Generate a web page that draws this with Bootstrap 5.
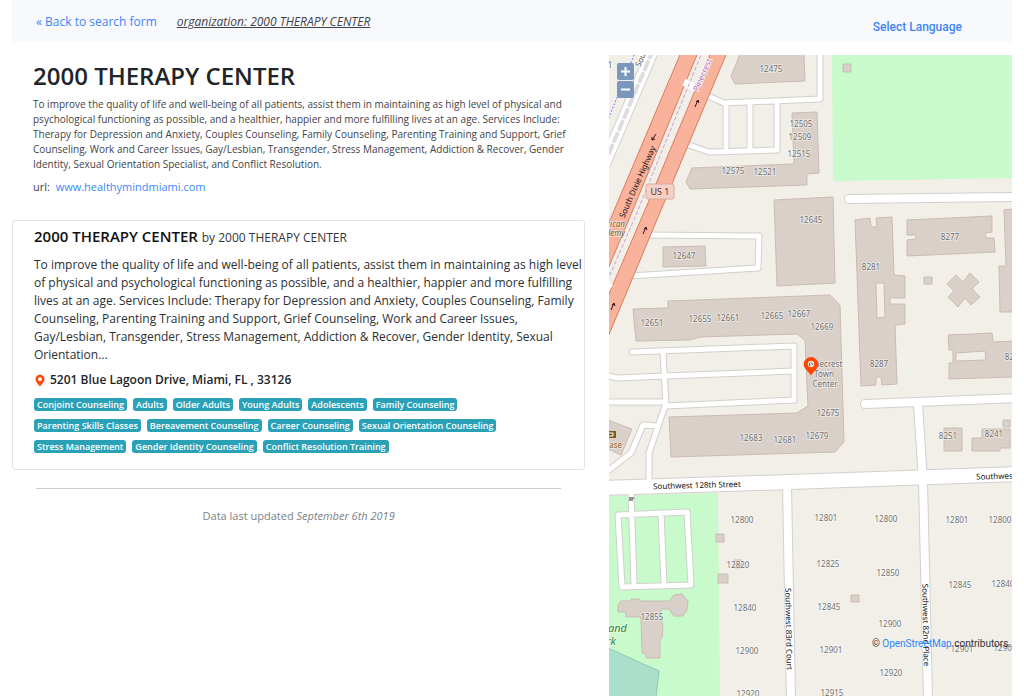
<!DOCTYPE html>
<html lang="en">
<head>
<meta charset="utf-8">
<meta name="viewport" content="width=device-width, initial-scale=1">
<title>2000 THERAPY CENTER</title>
<link href="https://cdn.jsdelivr.net/npm/bootstrap@5.3.0/dist/css/bootstrap.min.css" rel="stylesheet">
<style>
  body { font-family: "Open Sans", "Noto Sans", sans-serif; font-size: 12px; line-height: 18px; color: #212529; }
  a { color: #3d86f8; text-decoration: none; }
  a:hover { text-decoration: underline; }
  .topbar { background: #f8f9fc; height: 42px; padding: 0 24px; }
  .crumbs { gap: 20px; padding-top: 2px; }
  .crumb { color: #3f4347; font-style: italic; text-decoration: underline; }
  .language { font-family: Roboto, sans-serif; font-weight: 500; padding: 18px 26px 0 0; }
  .org-head { padding: 12px 6px 0 21px; }
  .org-head h1 { font-size: 24px; line-height: 28px; font-weight: 600; margin: 0 0 7px; }
  .org-text { font-size: 10px; line-height: 15px; color: #3f4347; margin: 0 0 6px; }
  .org-url { font-size: 11px; line-height: 18px; margin: 0 0 24px; color: #3f4347; }
  .service { border-color: #e2e3e5; border-radius: 3px; padding: 6px 2px 16px 21px; }
  .service h2 { font-size: 15px; line-height: 18px; font-weight: 600; margin: 0 0 9px; color: #111; }
  .service h2 small { font-size: 12px; font-weight: 400; color: #33373b; }
  .service p { margin: 0 0 7px; color: #2b2f33; }
  .address { font-weight: 600; gap: 4px; margin-bottom: 9px; }
  .tags { gap: 8px 6px; padding-right: 36px; }
  .tags .badge { font-size: 9px; line-height: 13px; font-weight: 600; padding: 0 3px; border-radius: 3px; background: #2aa1b7; }
  .rule { margin: 18px 24px 18px; color: #9a9c9f; opacity: .5; }
  .updated { font-size: 11px; color: #7b8187; }
  .map { height: calc(100vh - 55px); min-height: 480px; margin-top: 13px; background: #f2efe9; }
  .zoomers { top: 8px; left: 8px; gap: 1px; }
  .zoomers button { width: 17px; height: 17px; padding: 0; border: 0; border-radius: 2px; background: #7b98bc; display: flex; }
  .credit { right: 1px; bottom: 43px; font-size: 10px; line-height: 18px; color: #333; white-space: nowrap; font-family: Roboto, sans-serif; }
  .credit a { color: #2a86ff; }

  .mapart text { font-family: "Noto Sans", sans-serif; font-size: 8px; text-anchor: middle; fill: #707070; stroke: #fff; stroke-opacity: .55; stroke-width: 1.6px; paint-order: stroke; }
  .mapart .street text { fill: #111; stroke-opacity: 1; }
  .bld { fill: #d9d0c9; stroke: #cbbbb0; stroke-width: 1; }
  .casing { fill: none; stroke: #d2d0cc; stroke-linejoin: round; }
  .way { fill: none; stroke: #fff; stroke-linejoin: round; }
  .hwy { fill: #f9b29c; stroke: #d87c5c; stroke-width: 1; }
</style>
</head>
<body>
<div class="container-fluid">
  <header class="topbar d-flex justify-content-between">
    <nav class="crumbs d-flex align-items-center">
      <a href="#">« Back to search form</a>
      <span class="crumb">organization: 2000 THERAPY CENTER</span>
    </nav>
    <div class="language"><a href="#">Select Language</a></div>
  </header>

  <div class="row">
    <main class="col-7">
      <section class="org-head mt-2">
        <h1>2000 THERAPY CENTER</h1>
        <p class="org-text">To improve the quality of life and well-being of all patients, assist them in maintaining as high level of physical and psychological functioning as possible, and a healthier, happier and more fulfilling lives at an age. Services Include: Therapy for Depression and Anxiety, Couples Counseling, Family Counseling, Parenting Training and Support, Grief Counseling, Work and Career Issues, Gay/Lesbian, Transgender, Stress Management, Addiction &amp; Recover, Gender Identity, Sexual Orientation Specialist, and Conflict Resolution.</p>
        <p class="org-url">url: &nbsp;<a href="#">www.healthymindmiami.com</a></p>
      </section>

      <article class="card service">
        <h2>2000 THERAPY CENTER <small>by 2000 THERAPY CENTER</small></h2>
        <p>To improve the quality of life and well-being of all patients, assist them in maintaining as high level of physical and psychological functioning as possible, and a healthier, happier and more fulfilling lives at an age. Services Include: Therapy for Depression and Anxiety, Couples Counseling, Family Counseling, Parenting Training and Support, Grief Counseling, Work and Career Issues, Gay/Lesbian, Transgender, Stress Management, Addiction &amp; Recover, Gender Identity, Sexual Orientation...</p>
        <div class="address d-flex align-items-center">
          <svg width="12" height="13" viewBox="0 0 12 13" aria-hidden="true"><path d="M6 .8a4.500 4.500 0 0 0-4.500 4.500C1.500 8 4.300 10 6 12.600 7.700 10 10.500 8 10.500 5.300A4.500 4.500 0 0 0 6 .8z" fill="#ff4500"/><circle cx="6" cy="5.200" r="2" fill="#fff"/></svg>
          <span>5201 Blue Lagoon Drive, Miami, FL , 33126</span>
        </div>
        <div class="tags d-flex flex-wrap">
          <span class="badge">Conjoint Counseling</span>
          <span class="badge">Adults</span>
          <span class="badge">Older Adults</span>
          <span class="badge">Young Adults</span>
          <span class="badge">Adolescents</span>
          <span class="badge">Family Counseling</span>
          <span class="badge">Parenting Skills Classes</span>
          <span class="badge">Bereavement Counseling</span>
          <span class="badge">Career Counseling</span>
          <span class="badge">Sexual Orientation Counseling</span>
          <span class="badge">Stress Management</span>
          <span class="badge">Gender Identity Counseling</span>
          <span class="badge">Conflict Resolution Training</span>
        </div>
      </article>

      <hr class="rule">
      <p class="updated text-center mb-0">Data last updated <em>September 6th 2019</em></p>
    </main>

    <aside class="col-5">
      <div class="map position-relative overflow-hidden">
        <svg class="mapart d-block w-100 h-100" viewBox="609 55 403 641" preserveAspectRatio="xMinYMin slice" role="img" aria-label="Street map">
          <!-- parks and pool -->
          <path fill="#c8facc" d="M832 55H1013V178L833 181zM609 496L718 493 720 697H609z"/>
          <path fill="#aae0cb" stroke="#8fc9b3" d="M608 648L659 671 656 697H608z"/>

          <!-- buildings -->
          <g class="bld">
            <path d="M740 54H804L805 81 735 84 731 76z"/>
            <path d="M792 113L817 112 819 173 807 174V185L690 189 686 182 692 168 794 164z"/>
            <path d="M774 200L833 197 835 283 777 286z"/>
            <path d="M663 247L705 246 706 266 663 267z"/>
            <path d="M633 309L668 308V301L830 295 840 305 844 442 835 452 671 457 669 417 797 413 808 406 805 340 797 334 701 337 690 340 636 341z"/>
            <path fill-rule="evenodd" d="M855 220L870 218 871 227H877L876 218 892 217 894 275 905 276V298H890V304H905V324L895 325 897 384 882 385 881 377H876V385L861 386zM876 283H884L885 317 877 318z"/>
            <path d="M907 220L992 216V232L985 233 986 238H994L995 252 907 256V240L916 239V235H907z"/>
            <path d="M1013 209L1004 210 1006 266H999L1000 312H1013z"/>
            <path d="M956 275L963 282 970 273 979 282 972 289 980 297 971 305 965 298 958 307 948 297 954 291 947 284z"/>
            <path fill-rule="evenodd" d="M948 335L992 333 993 342 1013 341V377L949 379V363H953V350H949zM956 353L985 351 986 360 956 361z"/>
            <path d="M944 428H962V451H944zM982 429H1010V448H1000V451H972V438H982zM1003 420H1010V427H1003z"/>
            <path d="M843 64H851V72H843zM924 277H932V284H924zM716 534H724V542H716zM734 560H742V568H734zM718 574H728V583H718zM851 595H859V602H851z"/>
            <path d="M608 420L632 429 621 455 608 449z"/>
            <path d="M618 605L621 601H631V599H640V601H669L674 595 682 594 688 601 687 610 683 616H674L669 609H661V617L663 628 662 638 660 639V658H646V654L642 653 641 617H626V612H618z"/>
          </g>

          <!-- service ways and streets: casing below, white above -->
          <defs>
            <g id="lanes">
              <path d="M708 96L724 103 820 99V50M726 103V152M750 102V151M686 144L709 152 777 150V101"/>
              <path d="M645 235L759 236 758 268 630 276"/>
              <path d="M632 352L794 346 794 400 665 406M605 375L617 378 665 376 794 371M605 402H665M663 352L666 406"/>
              <path d="M665 406L649 453V484M657 426L643 425 631 453 605 473"/>
              <path d="M631 490L634 586M687 512L618 515 622 587 691 585zM661 513L664 585"/>
            </g>
            <g id="streets">
              <path d="M849 199L1020 197M865 404L1020 398M918 404L923 480 928 700M787 485L791 700"/>
            </g>
          </defs>
          <use href="#lanes" class="casing" stroke-width="7" stroke-linecap="round"/>
          <use href="#streets" class="casing" stroke-width="10" stroke-linecap="round"/>
          <path class="casing" stroke-width="16" d="M600 488L790 482 1020 474"/>
          <path class="casing" stroke-width="13" d="M604 165L653 50"/>
          <use href="#lanes" class="way" stroke-width="5" stroke-linecap="round"/>
          <use href="#streets" class="way" stroke-width="8" stroke-linecap="round"/>
          <path class="way" stroke-width="14" d="M600 488L790 482 1020 474"/>
          <path class="way" stroke-width="11" d="M604 165L653 50"/>
          <path fill="none" stroke="#ddd" stroke-width="4" stroke-dasharray="8 5" stroke-linecap="round" d="M604 165L653 50"/>
          <path fill="none" stroke="#5a5aff" stroke-dasharray="1.500 2" d="M634 55L608 120"/>

          <!-- highway -->
          <path class="hwy" d="M682 50H699L632 212 605 276V232z"/>
          <path class="hwy" d="M712 50H728L661 210 605 344V303L645 210z"/>
          <path class="way" stroke-width="7" d="M684 82L696 88M604 283L611 288"/>
          <path fill="none" stroke="#cf9bcb" stroke-dasharray="4 2" d="M703 50L636 215 606 284"/>
          <g fill="none" stroke="#3b1010">
            <path d="M695 107L698 100M696 102L698 100 699 103"/>
            <path d="M656 134L652 140M652 137L652 140 655 139"/>
            <path d="M643 234L646 227M644 229L646 227 647 230"/>
            <path d="M611 310L614 303M612 305L614 303 615 306"/>
          </g>
          <rect x="646" y="184" width="28" height="15" rx="2" fill="#f3d1c8" stroke="#dfa99b"/>
          <path stroke="#222" d="M629 498H634M629 500H633"/>
          <path fill="#7c5a1c" d="M608 431H616V438H608z"/><path fill="none" stroke="#fff" d="M608 433H613V436H608"/>

          <!-- house numbers -->
          <g>
            <text x="771" y="72">12475</text><text x="801" y="127">12505</text><text x="800" y="140">12509</text><text x="799" y="157">12515</text>
            <text x="733" y="174">12575</text><text x="765" y="175">12521</text><text x="811" y="223">12645</text><text x="684" y="259">12647</text>
            <text x="950" y="240">8277</text><text x="871" y="270">8281</text><text x="879" y="367">8287</text><text x="1014" y="360">8231</text>
            <text x="652" y="326">12651</text><text x="700" y="322">12655</text><text x="728" y="321">12661</text><text x="772" y="319">12665</text>
            <text x="799" y="317">12667</text><text x="822" y="330">12669</text><text x="828" y="416">12675</text><text x="817" y="439">12679</text>
            <text x="751" y="441">12683</text><text x="785" y="443">12681</text><text x="948" y="439">8251</text><text x="994" y="437">8241</text>
            <text x="742" y="523">12800</text><text x="738" y="568">12820</text><text x="745" y="611">12840</text><text x="747" y="654">12900</text>
            <text x="748" y="697">12920</text><text x="826" y="521">12801</text><text x="886" y="522">12800</text><text x="957" y="523">12801</text>
            <text x="1000" y="523">12800</text><text x="828" y="567">12825</text><text x="888" y="576">12850</text><text x="829" y="610">12845</text>
            <text x="831" y="653">12901</text><text x="832" y="696">12915</text><text x="890" y="627">12900</text><text x="891" y="676">12920</text>
            <text x="960" y="588">12845</text><text x="1003" y="587">12840</text><text x="962" y="652">12901</text><text x="1005" y="651">12900</text>
            <text x="652" y="620">12855</text><text x="610" y="68">1</text>
          </g>
          <!-- names -->
          <g class="street">
            <text transform="translate(697 488) rotate(-1.500)">Southwest 128th Street</text>
            <text transform="translate(996 479) rotate(-1.500)">Southwest</text>
            <text transform="translate(786 629) rotate(89)">Southwest 83rd Court</text>
            <text transform="translate(923 625) rotate(89)">Southwest 82nd Place</text>
            <text transform="translate(640 183) rotate(-66)" style="stroke-opacity:0">South Dixie Highway</text>
            <text transform="translate(643 61) rotate(-66)" style="fill:#555">Sou</text>
            <text transform="translate(705 76) rotate(-66)" style="fill:#b45fb4">Pinecrest</text>
            <text x="660" y="195" style="font-size:9px;fill:#6b2a20;stroke-opacity:0">US 1</text>
          </g>
          <g>
            <text x="825" y="367">Pinecrest</text><text x="824" y="377">Town</text><text x="825" y="387">Center</text>
            <text x="625" y="227" style="text-anchor:end;font-style:italic;fill:#6e6236">rican</text><text x="625" y="236" style="text-anchor:end;font-style:italic;fill:#6e6236">demy</text>
            <text x="622" y="448" style="text-anchor:end;fill:#8a5a1a">ase</text>
            <text x="627" y="632" style="font-size:11px;text-anchor:end;font-style:italic;fill:#2f7f3a">and</text><text x="616" y="645" style="font-size:11px;text-anchor:end;font-style:italic;fill:#2f7f3a">rk</text>
          </g>
          <!-- marker -->
          <path fill="#ff4500" d="M811 357a7.300 7.300 0 0 0-7.300 7.300C803.700 368.500 808 371 811 375.500 814 371 818.300 368.500 818.300 364.300A7.300 7.300 0 0 0 811 357z"/>
          <circle cx="811" cy="364" r="3.200" fill="#e8e3df"/><path d="M809.500 363V366M811 362.500L813 365" stroke="#666" fill="none"/>
        </svg>

        <div class="zoomers position-absolute d-flex flex-column">
          <button type="button" aria-label="Zoom in"><svg viewBox="0 0 17 17"><path d="M8.500 4V13M4 8.500H13" stroke="#fff" stroke-width="2"/></svg></button>
          <button type="button" aria-label="Zoom out"><svg viewBox="0 0 17 17"><path d="M4 8.500H13" stroke="#fff" stroke-width="2"/></svg></button>
        </div>
        <div class="credit position-absolute">© <a href="#">OpenStreetMap</a> contributors.</div>
      </div>
    </aside>
  </div>
</div>
<script src="https://cdn.jsdelivr.net/npm/bootstrap@5.3.0/dist/js/bootstrap.bundle.min.js"></script>
</body>
</html>
